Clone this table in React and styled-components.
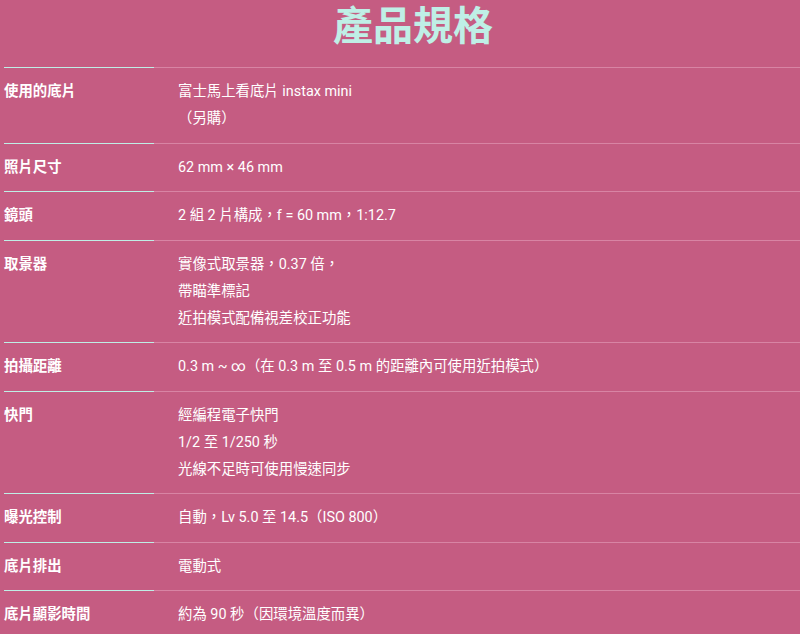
import React from "react";
import styled, {createGlobalStyle} from "styled-components";

const GlobalStyle = createGlobalStyle`
	body {
		margin: 0;
		background: #c55c82;
		font-family: "Roboto", "Noto Sans CJK TC", sans-serif;
		color: #ffffff;
	}
`;

const Page = styled.section`
	display: flex;
	flex-direction: column;
	padding-left: 4px;
	min-height: 634px;
	box-sizing: border-box;
`;

const Title = styled.h1`
	margin: 0 0 21px;
	padding-left: 22px;
	text-align: center;
	font-size: 40px;
	line-height: 46px;
	font-weight: 700;
	color: #bfefe6;
	font-family: "Noto Sans CJK TC", sans-serif;
`;

const SpecList = styled.dl`
	margin: 0;
	display: flex;
	flex-direction: column;
`;

const Row = styled.div`
	display: flex;
	border-top: 1px solid #d884a4;
	padding-bottom: 10.5px;
`;

const Label = styled.dt`
	width: 150px;
	flex-shrink: 0;
	margin-top: -1px;
	padding-top: 10px;
	border-top: 1px solid #bfefe6;
	font-size: 14.4px;
	line-height: 27px;
	font-weight: 700;
`;

const Value = styled.dd`
	margin: 0 0 0 24px;
	padding-top: 10px;
	font-size: 14.4px;
	line-height: 27px;
`;

const Line = styled.div`
	white-space: nowrap;
`;

const specs = [
	{label: "使用的底片", lines: ["富士馬上看底片 instax mini", "（另購）"]},
	{label: "照片尺寸", lines: ["62 mm × 46 mm"]},
	{label: "鏡頭", lines: ["2 組 2 片構成，f = 60 mm，1:12.7"]},
	{
		label: "取景器",
		lines: ["實像式取景器，0.37 倍，", "帶瞄準標記", "近拍模式配備視差校正功能"],
	},
	{label: "拍攝距離", lines: ["0.3 m ~ ∞（在 0.3 m 至 0.5 m 的距離內可使用近拍模式）"]},
	{label: "快門", lines: ["經編程電子快門", "1/2 至 1/250 秒", "光線不足時可使用慢速同步"]},
	{label: "曝光控制", lines: ["自動，Lv 5.0 至 14.5（ISO 800）"]},
	{label: "底片排出", lines: ["電動式"]},
	{label: "底片顯影時間", lines: ["約為 90 秒（因環境溫度而異）"]},
];

export default function App() {
	return (
		<>
			<GlobalStyle />
			<Page>
				<Title>產品規格</Title>
				<SpecList>
					{specs.map((item) => (
						<Row key={item.label}>
							<Label>{item.label}</Label>
							<Value>
								{item.lines.map((line) => (
									<Line key={line}>{line}</Line>
								))}
							</Value>
						</Row>
					))}
				</SpecList>
			</Page>
		</>
	);
}
